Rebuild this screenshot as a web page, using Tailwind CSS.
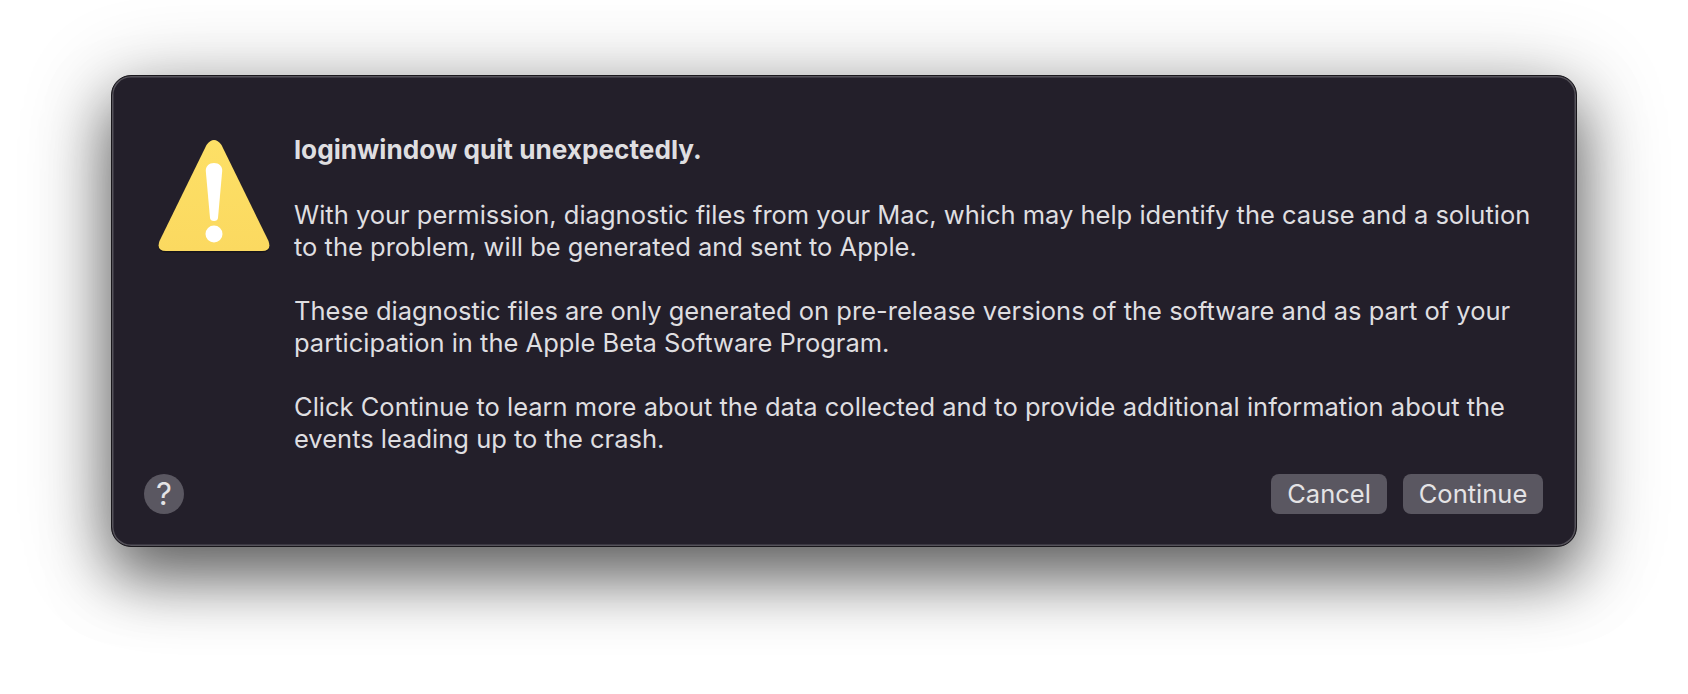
<!DOCTYPE html>
<html lang="en">
	<head>
		<meta charset="UTF-8" />
		<title>loginwindow quit unexpectedly</title>
		<script src="https://cdn.jsdelivr.net/npm/@tailwindcss/browser@4"></script>
	</head>
	<body class="bg-white h-[694px] overflow-hidden font-['Inter',sans-serif]">
		<div class="pt-[75px] pl-[111px]">
			<div class="w-[1466px] h-[472px] flex flex-col rounded-[20px] bg-[#231f2a] border border-[#19171c] pt-[64px] pr-[33px] pb-[32px] pl-[32px] shadow-[inset_0_0_0_1.5px_#55525a,0_30px_60px_rgba(0,0,0,0.5),0_14px_90px_rgba(0,0,0,0.3)]">
				<div class="flex flex-1">
					<div class="w-[150px] shrink-0 pl-[14px]">
						<svg class="w-[112px] h-[116px]" viewBox="0 0 112 116">
							<defs>
								<linearGradient id="warn" x1="0" y1="0" x2="0" y2="1">
									<stop offset="0" stop-color="#fde066" />
									<stop offset="1" stop-color="#fbd960" />
								</linearGradient>
							</defs>
							<path d="M48.5 5 Q56 -5 63.5 5 L110.5 101 Q114 111 104 111 L8 111 Q-2 111 1.5 101 Z" fill="#000" fill-opacity="0.35" transform="translate(0 1.5)" />
							<path d="M48.5 5 Q56 -5 63.5 5 L110.5 101 Q114 111 104 111 L8 111 Q-2 111 1.5 101 Z" fill="url(#warn)" />
							<path d="M56 23 C61 23 64.5 26.5 64.2 31 L60 78 Q59.6 81 56 81 Q52.4 81 52 78 L47.8 31 C47.5 26.5 51 23 56 23 Z" fill="#fff" />
							<circle cx="56" cy="94" r="8.5" fill="#fff" />
						</svg>
					</div>
					<div class="text-[25.5px] leading-[32px] text-[#dfdee0] -mt-[6px]">
						<p class="font-bold text-[26.2px] mb-[33px]">loginwindow quit unexpectedly.</p>
						<p class="mb-[32px]">With your permission, diagnostic files from your Mac, which may help identify the cause and a solution<br />to the problem, will be generated and sent to Apple.</p>
						<p class="mb-[32px]">These diagnostic files are only generated on pre-release versions of the software and as part of your<br />participation in the Apple Beta Software Program.</p>
						<p>Click Continue to learn more about the data collected and to provide additional information about the<br />events leading up to the crash.</p>
					</div>
				</div>
				<div class="flex items-center gap-[16px]">
					<div class="w-[40px] h-[40px] rounded-full bg-[#5a5761] flex items-center justify-center text-[#e4e3e5] text-[31px] mr-auto">?</div>
					<div class="w-[116px] h-[40px] rounded-[8px] bg-[#5a5761] flex items-center justify-center text-[#e4e3e5] text-[25.5px]">Cancel</div>
					<div class="w-[140px] h-[40px] rounded-[8px] bg-[#5a5761] flex items-center justify-center text-[#e4e3e5] text-[25.5px]">Continue</div>
				</div>
			</div>
		</div>
	</body>
</html>
